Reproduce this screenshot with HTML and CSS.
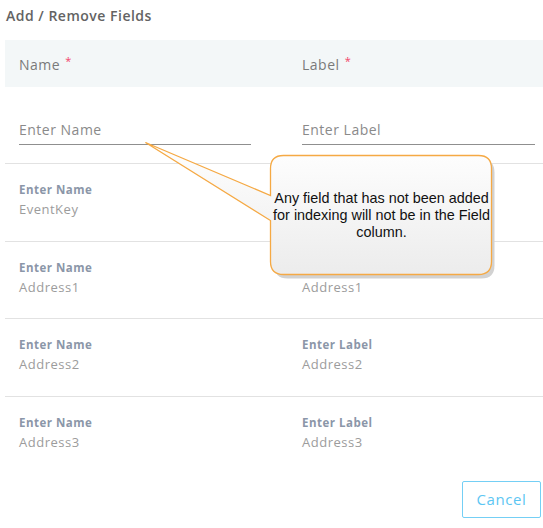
FILE: index.html
```html
<!DOCTYPE html>
<html>
<head>
<meta charset="utf-8">
<link rel="stylesheet" href="styles.css">
</head>
<body>
<div class="page">
  <div class="title">Add / Remove Fields</div>
  <div class="grid header">
    <div class="cell">Name <span class="req">*</span></div>
    <div class="cell">Label <span class="req">*</span></div>
  </div>
  <div class="grid inputs">
    <div class="cell"><div class="input">Enter Name</div></div>
    <div class="cell"><div class="input">Enter Label</div></div>
  </div>
  <div class="grid row">
    <div class="cell"><div class="lbl">Enter Name</div><div class="val">EventKey</div></div>
    <div class="cell"><div class="lbl">Enter Label</div><div class="val">EventKey</div></div>
  </div>
  <div class="grid row">
    <div class="cell"><div class="lbl">Enter Name</div><div class="val">Address1</div></div>
    <div class="cell"><div class="lbl">Enter Label</div><div class="val">Address1</div></div>
  </div>
  <div class="grid row">
    <div class="cell"><div class="lbl">Enter Name</div><div class="val">Address2</div></div>
    <div class="cell"><div class="lbl">Enter Label</div><div class="val">Address2</div></div>
  </div>
  <div class="grid row last">
    <div class="cell"><div class="lbl">Enter Name</div><div class="val">Address3</div></div>
    <div class="cell"><div class="lbl">Enter Label</div><div class="val">Address3</div></div>
  </div>
  <div class="footer">
    <button class="cancel">Cancel</button>
  </div>

  <div class="callout">
    <svg class="callout-shape" width="543" height="528" viewBox="0 0 543 528">
      <defs>
        <linearGradient id="g" x1="0" y1="0" x2="0" y2="1">
          <stop offset="0" stop-color="#ffffff"/>
          <stop offset="1" stop-color="#ececec"/>
        </linearGradient>
      </defs>
      <path d="M285.5 158.5 H479.5 Q492.5 158.5 492.5 171.5 V264.5 Q492.5 277.5 479.5 277.5 H285.5 Q272.5 277.5 272.5 264.5 V171.5 Q272.5 158.5 285.5 158.5 Z" fill="#d2d2d2" transform="translate(2,1)"/>
      <path d="M283.5 155.5 H478.5 Q491.5 155.5 491.5 168.5 V261.5 Q491.5 274.5 478.5 274.5 H283.5 Q270.5 274.5 270.5 261.5 V220.5 L145.5 142.5 L270.5 195.5 V168.5 Q270.5 155.5 283.5 155.5 Z" fill="url(#g)" stroke="#f5a944" stroke-width="1.3" stroke-linejoin="miter"/>
    </svg>
    <div class="callout-text">Any field that has not been added for indexing will not be in the Field column.</div>
  </div>
</div>
</body>
</html>
```
FILE: styles.css
```css
* { box-sizing: border-box; }
html, body { margin: 0; padding: 0; background: #fff; }
body {
  font-family: "Open Sans", "DejaVu Sans", sans-serif;
  letter-spacing: 0.5px;
}
.page {
  position: relative;
  width: 543px;
  height: 528px;
  overflow: hidden;
}
.title {
  height: 40px;
  padding: 6px 0 0 6px;
  font-size: 14px;
  font-weight: 600;
  color: #636363;
}
.grid {
  margin-left: 5px;
  display: grid;
  grid-template-columns: 283px 1fr;
}
.cell { padding-left: 14px; }
.header {
  height: 47px;
  background: #f3f7f8;
  align-items: center;
  font-size: 14px;
  color: #7a7a7a;
}
.req {
  color: #f2456a;
  font-size: 11px;
  vertical-align: 5px;
  margin-left: 1px;
}
.inputs {
  height: 77px;
  border-bottom: 1px solid #e2e2e2;
  padding-top: 33px;
}
.input {
  width: 232px;
  height: 25px;
  border-bottom: 1px solid #8f8f8f;
  font-size: 14px;
  color: #8a8a8a;
  line-height: 20px;
}
.inputs .cell:last-child .input { width: 233px; }
.row {
  height: 77.7px;
  border-bottom: 1px solid #e2e2e2;
  padding-top: 17px;
}
.row.last { border-bottom: none; }
.lbl {
  font-size: 11.5px;
  font-weight: 700;
  color: #8b96a8;
  line-height: 16px;
  padding-top: 1px;
}
.val {
  font-size: 13px;
  color: #9c9c9c;
  line-height: 20px;
  margin-top: 1px;
}
.footer {
  display: flex;
  justify-content: flex-end;
  padding: 6px 2px 0 0;
}
.cancel {
  width: 79px;
  height: 37px;
  border: 1px solid #74cff5;
  border-radius: 2px;
  background: #fff;
  color: #5cc6f3;
  font-family: "Open Sans", "DejaVu Sans", sans-serif;
  font-size: 15px;
  letter-spacing: 0.6px;
  padding: 0;
}
.callout {
  position: absolute;
  left: 0;
  top: 0;
  width: 543px;
  height: 528px;
  pointer-events: none;
}
.callout-shape {
  position: absolute;
  left: 0;
  top: 0;
}
.callout-text {
  position: absolute;
  left: 270px;
  top: 190px;
  width: 223px;
  text-align: center;
  font-family: "Liberation Sans", Arial, sans-serif;
  font-size: 14.4px;
  line-height: 17px;
  letter-spacing: 0;
  color: #111;
}
```
